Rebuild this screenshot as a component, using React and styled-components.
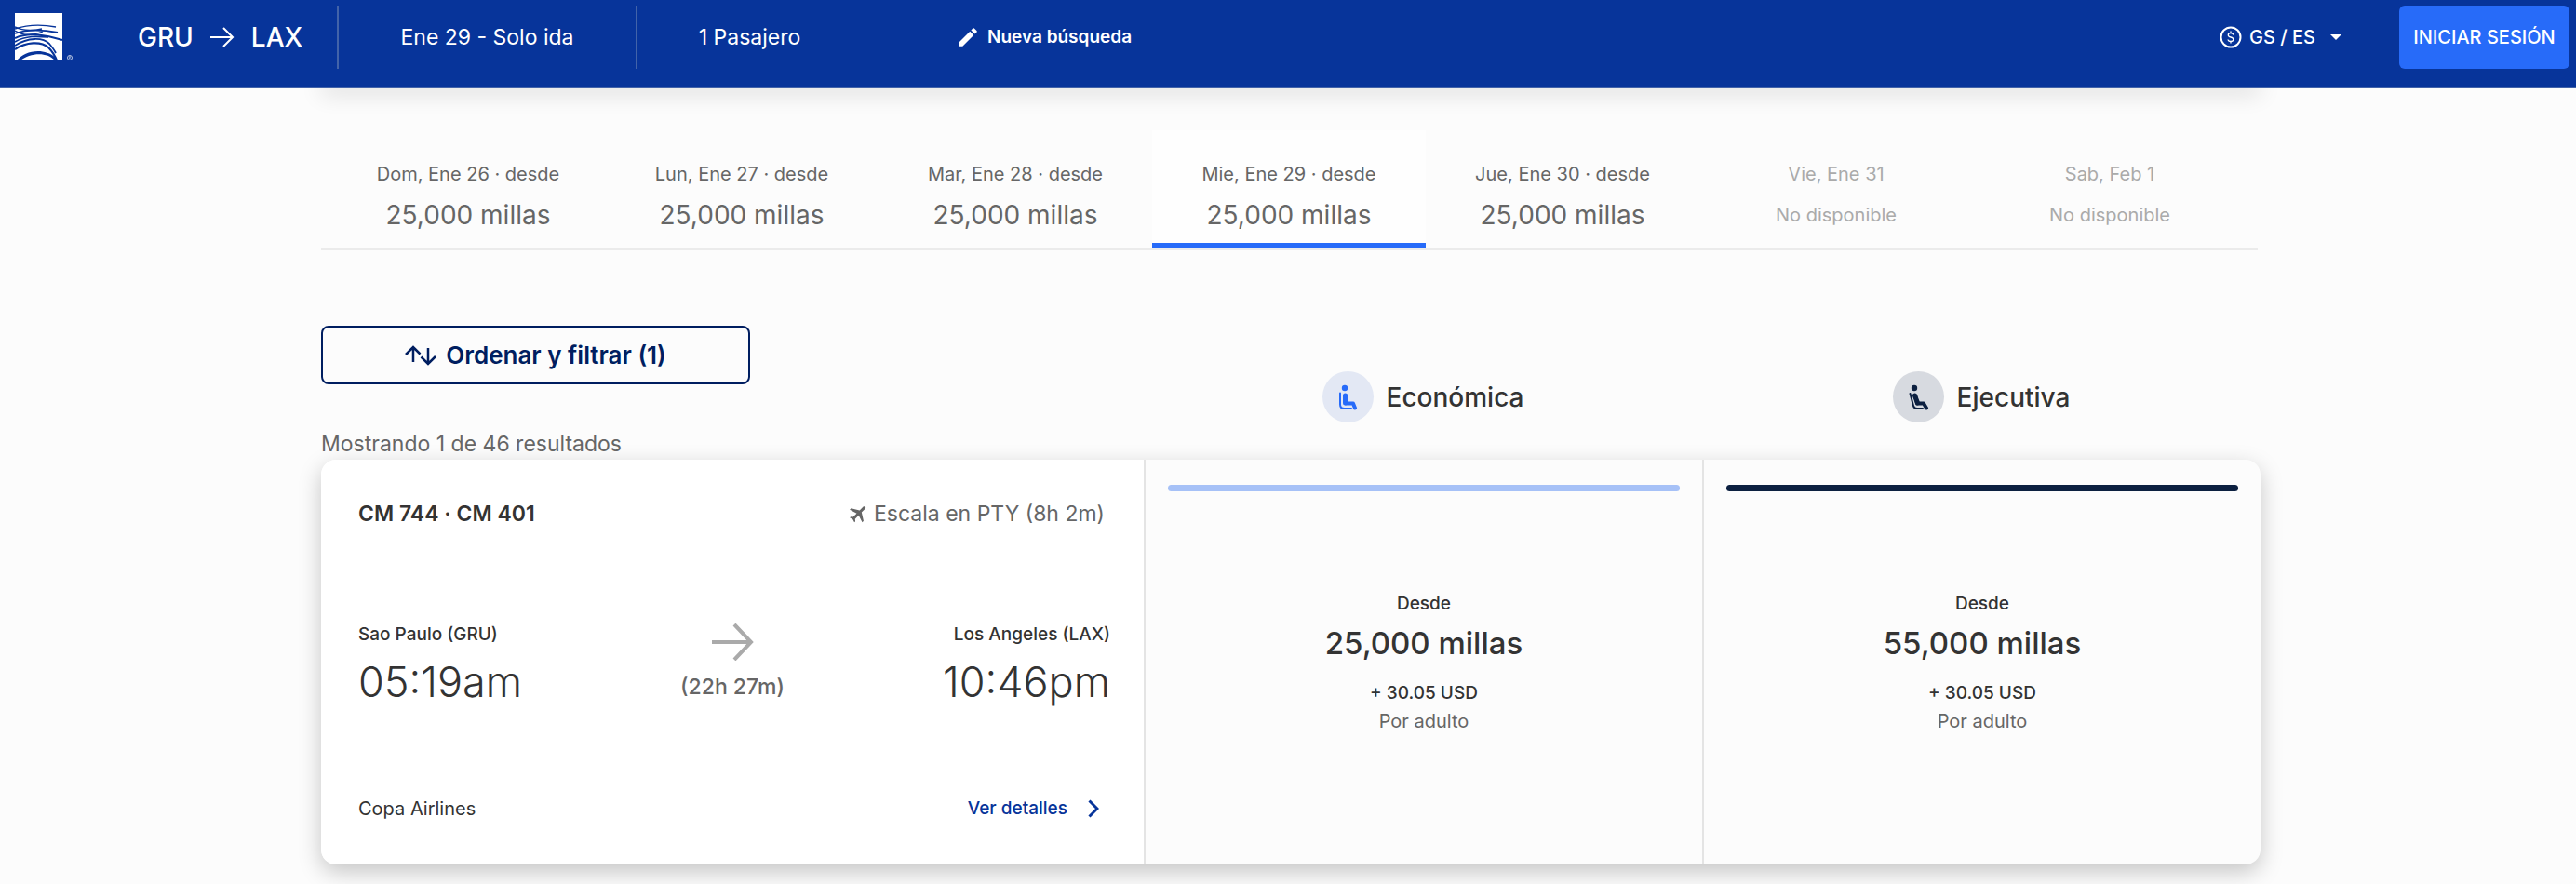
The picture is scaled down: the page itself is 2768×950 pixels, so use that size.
import React from 'react';
import styled, { createGlobalStyle } from 'styled-components';
import { MdEdit, MdFlight } from 'react-icons/md';

const GlobalStyle = createGlobalStyle`
    * {
        box-sizing: border-box;
    }
    body {
        margin: 0;
        background: #fcfcfc;
        color: #333;
        font-family: Inter, 'Liberation Sans', sans-serif;
        font-size: 20px;
        line-height: 28px;
    }
    button,
    select {
        font: inherit;
        color: inherit;
        background: none;
        border: none;
        padding: 0;
        cursor: pointer;
    }
    svg {
        display: block;
        flex: none;
    }
`;

/* header */
const Header = styled.header`
    position: relative;
    z-index: 1;
    display: flex;
    align-items: flex-start;
    height: 95px;
    padding: 6px 7px 0 16px;
    color: white;
    background: #07349a;
    border-bottom: 2px solid #4263a9;
`;
const HeaderItem = styled.div`
    display: flex;
    align-items: center;
    justify-content: center;
    height: 68px;
    width: ${(p) => p.$width}px;
    font-size: 23px;
    border-right: ${(p) => (p.$divider ? '2px solid #4263a9' : 'none')};
`;
const Brand = styled.a`
    display: flex;
    align-items: center;
    width: 132px;
    height: 68px;
`;
const Route = styled(HeaderItem)`
    justify-content: flex-start;
    gap: 18px;
    font-size: 28px;
    font-weight: 500;
`;
const NewSearch = styled.button`
    display: flex;
    align-items: center;
    gap: 8px;
    height: 68px;
    margin-left: 101px;
    font-size: 19px;
    font-weight: 600;
`;
const HeaderEnd = styled.div`
    display: flex;
    align-items: center;
    gap: 62px;
    margin-left: auto;
`;
const Locale = styled.label`
    display: flex;
    align-items: center;
    gap: 8px;
    font-weight: 500;
    select {
        appearance: none;
        padding-right: 8px;
    }
`;
const Login = styled.button`
    width: 183px;
    height: 68px;
    border-radius: 6px;
    background: #276bf9;
    font-weight: 500;
`;

/* page */
const Main = styled.main`
    padding: 0 339px 48px 345px;
`;
const PanelEdge = styled.div`
    height: 10px;
    margin-top: -10px;
    background: white;
    box-shadow: 0 4px 24px rgb(0 0 0 / 20%);
`;
const Tabs = styled.nav`
    display: flex;
    margin: 45px 3px 0 0;
    padding: 0 12px 0 11px;
    border-bottom: 2px solid #ebebeb;
`;
const Tab = styled.button`
    flex: 1;
    height: 127px;
    padding-top: 20px;
    color: ${(p) => (p.disabled ? '#aaa' : '#666')};
    background: ${(p) => (p.$active ? '#fefefe' : 'none')};
    border-bottom: 6px solid ${(p) => (p.$active ? '#276bf9' : 'transparent')};
`;
const TabPrice = styled.span`
    display: block;
    margin-top: 12px;
    line-height: 36px;
    font-size: ${(p) => (p.$small ? 20 : 28)}px;
`;

const Columns = styled.div`
    display: grid;
    grid-template-columns: 884fr 600fr 600fr;
`;
const ListHeader = styled(Columns)`
    margin-top: 81px;
    height: 144px;
`;
const FilterButton = styled.button`
    display: flex;
    align-items: center;
    justify-content: center;
    gap: 10px;
    width: 461px;
    height: 63px;
    border: 2px solid #001e60;
    border-radius: 8px;
    color: #001e60;
    font-size: 26px;
    font-weight: 600;
`;
const ResultCount = styled.p`
    margin: 50px 0 0;
    color: #666;
    font-size: 23px;
`;
const Cabin = styled.h2`
    display: flex;
    align-items: center;
    justify-content: center;
    gap: 14px;
    height: 55px;
    margin: 49px 0 0;
    font-size: 28px;
    font-weight: 500;
`;
const CabinIcon = styled.span`
    display: flex;
    align-items: center;
    justify-content: center;
    width: 55px;
    height: 55px;
    border-radius: 50%;
    color: ${(p) => p.$color};
    background: ${(p) => p.$bg};
`;

const Card = styled(Columns)`
    height: 435px;
    border-radius: 16px;
    background: #fcfcfc;
    box-shadow: 0 8px 24px rgb(0 0 0 / 22%);
    overflow: hidden;
`;
const Flight = styled.section`
    display: flex;
    flex-direction: column;
    justify-content: space-between;
    padding: 44px 36px 46px 40px;
    background: white;
`;
const Row = styled.div`
    display: flex;
    align-items: center;
    justify-content: space-between;
`;
const FlightNumber = styled.strong`
    font-size: 23px;
    font-weight: 600;
`;
const Stop = styled.span`
    display: flex;
    align-items: center;
    gap: 4px;
    padding-right: 6px;
    color: #666;
    font-size: 23px;
    svg {
        transform: rotate(45deg);
    }
`;
const Place = styled.div`
    padding-top: 4px;
    font-size: 19px;
    font-weight: 500;
    text-align: ${(p) => p.$align};
`;
const Time = styled.time`
    display: block;
    margin-top: 12px;
    font-size: 45px;
    line-height: 50px;
    font-weight: 300;
`;
const Duration = styled.div`
    display: flex;
    flex-direction: column;
    align-items: center;
    gap: 14px;
    color: #666;
    font-size: 23px;
    font-weight: 500;
`;
const Details = styled.button`
    display: flex;
    align-items: center;
    gap: 22px;
    padding-right: 12px;
    color: #07349a;
    font-size: 19px;
    font-weight: 500;
`;

const Fare = styled.button`
    display: flex;
    flex-direction: column;
    align-items: center;
    padding: 27px 24px 0;
    border-left: 2px solid #e4e4e4;
`;
const FareBar = styled.span`
    width: 100%;
    height: 7px;
    margin-bottom: 106px;
    border-radius: 4px;
    background: ${(p) => p.$color};
`;
const FareText = styled.span`
    line-height: 30px;
    font-size: ${(p) => (p.$muted ? 20 : 19)}px;
    font-weight: ${(p) => (p.$muted ? 400 : 500)};
    color: ${(p) => (p.$muted ? '#666' : '#333')};
`;
const Miles = styled.span`
    margin: 4px 0 16px;
    font-size: 33px;
    line-height: 46px;
    font-weight: 500;
`;

const Logo = () => (
    <svg width="63" height="52" viewBox="0 0 63 52" fill="none">
        <rect width="51" height="51" fill="#fff" />
        <g stroke="#07349a" strokeLinecap="butt">
            <path d="M0 17C12 13 28 12 44 15" strokeWidth="1.4" />
            <path d="M0 15C8 19 16 20 29 17" strokeWidth="1.4" />
            <path d="M0 22C14 17 30 18 46 21" strokeWidth="1.8" />
            <path d="M0 19C8 24 18 25 30 20" strokeWidth="1.2" />
            <path d="M0 27C15 20 34 24 51 29" strokeWidth="2" />
            <path d="M0 31C12 24 24 25 36 26" strokeWidth="1.6" />
            <path d="M0 35C14 26 30 26 37 33Q42 39 44 43" strokeWidth="1.8" />
            <path d="M0 39C12 31 28 30 36 37Q42 43 45 51" strokeWidth="2.2" />
        </g>
        <path d="M2 51C10 41 30 36 44 48L45 51H43C34 41 16 43 6 51Z" fill="#07349a" />
        <circle cx="59" cy="48" r="2.5" stroke="#b9c6e3" strokeWidth="1" />
        <path d="M58.500 49.500v-3h1v1.500h-1l1.500 1.500" stroke="#b9c6e3" strokeWidth=".6" />
    </svg>
);

const Arrow = ({ width, height, stroke, color }) => (
    <svg width={width} height={height} viewBox={`0 0 ${width} ${height}`} fill="none" stroke={color} strokeWidth={stroke}>
        <path d={`M0 ${height / 2}H${width - stroke}M${width - height / 2 - 1} 1L${width - stroke / 2 - 1} ${height / 2}L${width - height / 2 - 1} ${height - 1}`} />
    </svg>
);

const SortIcon = () => (
    <svg width="34" height="22" viewBox="0 0 34 22" fill="none" stroke="currentColor" strokeWidth="2.500">
        <path d="M9 18V2M1 10L9 2L16.500 9.500M25 3V20M17.500 12.500L25 20L33 12" />
    </svg>
);

const SeatIcon = ({ reclined }) => (
    <svg width="26" height="28" viewBox="0 0 26 28" fill="none" stroke="currentColor" strokeLinecap="round" strokeLinejoin="round">
        <circle cx={reclined ? 9 : 10} cy="4" r="3.2" fill="currentColor" stroke="none" />
        {reclined ? (
            <>
                <path d="M4.500 10L8 23Q8.800 26 12 26H18" strokeWidth="2" />
                <path d="M10 12L12 20.500H19L22 25.500" strokeWidth="4" />
                <path d="M9.500 12L12.500 20" strokeWidth="5" />
            </>
        ) : (
            <>
                <path d="M5 9.500V21.500Q5 26 9.500 26H17" strokeWidth="2" />
                <path d="M11 12V20.500H19L21 25.500" strokeWidth="4" />
                <path d="M10.500 12V20" strokeWidth="5" />
            </>
        )}
    </svg>
);

const DollarIcon = () => (
    <svg width="24" height="24" viewBox="0 0 24 24" fill="none" stroke="currentColor">
        <circle cx="12" cy="12" r="10.500" strokeWidth="2" />
        <path d="M15 9.500C14.500 8 13.500 7.500 12 7.500C8.500 7.500 8.300 11.200 12 12C16 12.800 15.500 16.500 12 16.500C10.300 16.500 9.200 15.800 9 14.500M12 5.500V7.500M12 16.500V18.500" strokeWidth="1.300" />
    </svg>
);

const days = [
    { date: 'Dom, Ene 26', miles: '25,000' },
    { date: 'Lun, Ene 27', miles: '25,000' },
    { date: 'Mar, Ene 28', miles: '25,000' },
    { date: 'Mie, Ene 29', miles: '25,000', active: true },
    { date: 'Jue, Ene 30', miles: '25,000' },
    { date: 'Vie, Ene 31' },
    { date: 'Sab, Feb 1' },
];

const fares = [
    { miles: '25,000', color: '#a6c1f7' },
    { miles: '55,000', color: '#0c2040' },
];

export default () => {
    return (
        <>
            <GlobalStyle />
            <Header>
                <Brand href="#" aria-label="Copa Airlines">
                    <Logo />
                </Brand>
                <Route $width={216} $divider>
                    <span>GRU</span>
                    <Arrow width={26} height={22} stroke={2} color="#fff" />
                    <span>LAX</span>
                </Route>
                <HeaderItem $width={321} $divider>
                    Ene 29 - Solo ida
                </HeaderItem>
                <HeaderItem $width={241}>1 Pasajero</HeaderItem>
                <NewSearch>
                    <MdEdit size={26} />
                    Nueva búsqueda
                </NewSearch>
                <HeaderEnd>
                    <Locale>
                        <DollarIcon />
                        <select aria-label="GS / ES">
                            <option>GS / ES</option>
                        </select>
                        <svg width="12" height="6" viewBox="0 0 12 6">
                            <path d="M0 0H12L6 6Z" fill="#fff" />
                        </svg>
                    </Locale>
                    <Login>INICIAR SESIÓN</Login>
                </HeaderEnd>
            </Header>
            <Main>
                <PanelEdge />
                <Tabs>
                    {days.map((day) => (
                        <Tab key={day.date} $active={day.active} disabled={!day.miles}>
                            {day.date}
                            {day.miles && ' · desde'}
                            <TabPrice $small={!day.miles}>
                                {day.miles ? `${day.miles} millas` : 'No disponible'}
                            </TabPrice>
                        </Tab>
                    ))}
                </Tabs>
                <ListHeader>
                    <div>
                        <FilterButton>
                            <SortIcon />
                            Ordenar y filtrar (1)
                        </FilterButton>
                        <ResultCount>Mostrando 1 de 46 resultados</ResultCount>
                    </div>
                    <Cabin>
                        <CabinIcon $color="#276bf9" $bg="#e3e8f4">
                            <SeatIcon />
                        </CabinIcon>
                        Económica
                    </Cabin>
                    <Cabin>
                        <CabinIcon $color="#0c2040" $bg="#d7dae0">
                            <SeatIcon reclined />
                        </CabinIcon>
                        Ejecutiva
                    </Cabin>
                </ListHeader>
                <Card>
                    <Flight>
                        <Row>
                            <FlightNumber>CM 744 · CM 401</FlightNumber>
                            <Stop>
                                <MdFlight size={24} />
                                Escala en PTY (8h 2m)
                            </Stop>
                        </Row>
                        <Row>
                            <Place $align="left">
                                Sao Paulo (GRU)
                                <Time>05:19am</Time>
                            </Place>
                            <Duration>
                                <Arrow width={45} height={40} stroke={4} color="#aaa" />
                                (22h 27m)
                            </Duration>
                            <Place $align="right">
                                Los Angeles (LAX)
                                <Time>10:46pm</Time>
                            </Place>
                        </Row>
                        <Row>
                            <span>Copa Airlines</span>
                            <Details>
                                Ver detalles
                                <svg width="12" height="20" viewBox="0 0 12 20" fill="none" stroke="currentColor" strokeWidth="3">
                                    <path d="M1.500 1.500L10 10L1.500 18.500" />
                                </svg>
                            </Details>
                        </Row>
                    </Flight>
                    {fares.map((fare) => (
                        <Fare key={fare.miles}>
                            <FareBar $color={fare.color} />
                            <FareText>Desde</FareText>
                            <Miles>{fare.miles} millas</Miles>
                            <FareText>+ 30.05 USD</FareText>
                            <FareText $muted>Por adulto</FareText>
                        </Fare>
                    ))}
                </Card>
            </Main>
        </>
    );
};
